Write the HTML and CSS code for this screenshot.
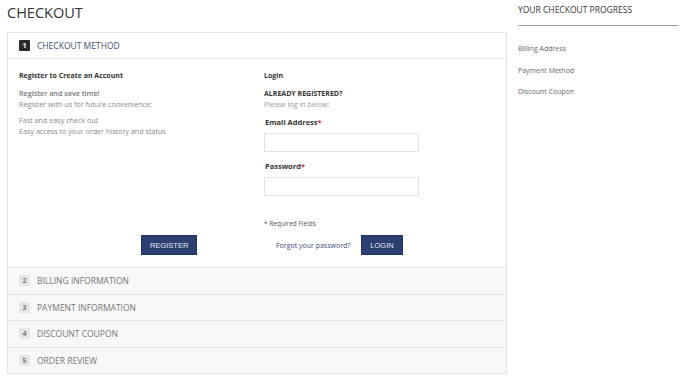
FILE: index.html
```html
<!DOCTYPE html>
<html>
<head>
<meta charset="UTF-8">
<title>Checkout</title>
<link rel="stylesheet" href="styles.css">
</head>
<body>
<div class="page">

<div class="main">
<h1 class="pageTitle">CHECKOUT</h1>

<div class="steps">

<div class="step active">
<div class="stepHead"><span class="num">1</span><span class="stepName">CHECKOUT METHOD</span></div>
<div class="stepBody">

<div class="col colLeft">
<div class="colTop">
<h3 class="colTitle">Register to Create an Account</h3>
<p class="strongLine">Register and save time!</p>
<p class="grey">Register with us for future convenience:</p>
<ul class="perks">
<li>Fast and easy check out</li>
<li>Easy access to your order history and status</li>
</ul>
</div>
<div class="actions regActions">
<button type="button" class="btn">REGISTER</button>
</div>
</div>

<div class="col colRight">
<div class="colTop">
<h3 class="colTitle">Login</h3>
<h4 class="subTitle">ALREADY REGISTERED?</h4>
<p class="lightGrey">Please log in below:</p>
<form id="fLogin">
<label class="fieldLabel" for="email">Email Address<em>*</em></label>
<input type="text" id="email" class="field">
<label class="fieldLabel" for="pass">Password<em>*</em></label>
<input type="password" id="pass" class="field">
<p class="required">* Required Fields</p>
</form>
</div>
<div class="actions loginActions">
<a class="forgot" href="#">Forgot your password?</a>
<button type="button" class="btn">LOGIN</button>
</div>
</div>

</div>
</div>

<div class="step"><div class="stepHead"><span class="num">2</span><span class="stepName">BILLING INFORMATION</span></div></div>
<div class="step"><div class="stepHead"><span class="num">3</span><span class="stepName">PAYMENT INFORMATION</span></div></div>
<div class="step"><div class="stepHead"><span class="num">4</span><span class="stepName">DISCOUNT COUPON</span></div></div>
<div class="step"><div class="stepHead"><span class="num">5</span><span class="stepName">ORDER REVIEW</span></div></div>

</div>
</div>

<div class="side">
<h2 class="sideTitle">YOUR CHECKOUT PROGRESS</h2>
<ul class="progress">
<li>Billing Address</li>
<li>Payment Method</li>
<li>Discount Coupon</li>
</ul>
</div>

</div>
</body>
</html>
```

FILE: styles.css
```css
body{
margin: 0;
font-family: "Open Sans", "Liberation Sans", sans-serif;
color: #333;
background: #fff;
}

.page{
display: flex;
padding: 3px 0 0 7px;
gap: 11px;
}

.main{
width: 500px;
}

.pageTitle{
margin: 0 0 9px 0;
font-size: 14.5px;
line-height: 20px;
font-weight: 400;
color: #333;
}

.steps{
border: 1px solid #e4e4e4;
}

.step + .step{
border-top: 1px solid #e4e4e4;
}

.stepHead{
display: flex;
align-items: center;
height: 25.5px;
padding-left: 11px;
background: #f8f8f8;
font-size: 8.5px;
color: #777;
}

.active .stepHead{
background: #fff;
color: #3d4c7c;
border-bottom: 1px solid #e8e8e8;
height: 25px;
}

.num{
display: inline-block;
width: 11px;
height: 11px;
line-height: 11px;
margin-right: 7px;
text-align: center;
font-size: 7px;
font-weight: 700;
background: #e6e6e6;
color: #777;
border-radius: 1px;
}

.active .num{
background: #2a2a2a;
color: #fff;
}

.stepBody{
display: flex;
padding: 11px 12px 12px 11px;
}

.col{
display: flex;
flex-direction: column;
justify-content: space-between;
height: 185px;
}

.colLeft{
flex: 0 0 245px;
}

.colRight{
flex: 1;
}

.colTop p, .colTop ul{
margin: 0;
}

.colTitle{
margin: 0 0 7px 0;
font-size: 7px;
line-height: 11px;
font-weight: 700;
color: #333;
}

.strongLine{
font-size: 7.2px;
line-height: 11px;
color: #777;
font-weight: 600;
}

.grey{
font-size: 7.2px;
line-height: 11px;
color: #888;
}

.perks{
list-style: none;
padding: 0;
margin-top: 5px !important;
font-size: 7.2px;
line-height: 11px;
color: #888;
}

.subTitle{
margin: 0;
font-size: 7px;
line-height: 11px;
font-weight: 700;
color: #333;
}

.lightGrey{
font-size: 7.2px;
line-height: 11px;
color: #999;
}

.fieldLabel{
display: block;
margin: 7px 0 5px 1px;
font-size: 7.5px;
line-height: 11px;
font-weight: 700;
color: #333;
}

.field + .fieldLabel{
margin-top: 9px;
}

.fieldLabel em{
font-style: normal;
color: #e0262e;
}

.field{
display: block;
box-sizing: border-box;
width: 155px;
height: 19px;
margin: 0;
border: 1px solid #e2e2e2;
background: #fff;
}

.required{
margin-top: 23px !important;
font-size: 6.5px;
line-height: 10px;
color: #555;
}

.actions{
display: flex;
align-items: center;
}

.regActions{
padding-left: 122px;
}

.loginActions{
padding-left: 12px;
gap: 11px;
}

.btn{
height: 20px;
padding: 0 8px;
border: 1px solid #1f3461;
background: #2b3f72;
color: #e6e9f2;
font-family: "Liberation Sans", Arial, sans-serif;
font-size: 7.5px;
}

.forgot{
font-size: 7px;
color: #3d4c7c;
text-decoration: none;
}

.side{
width: 160px;
}

.sideTitle{
margin: 0;
padding: 0 0 9px 0;
font-size: 8.5px;
line-height: 13px;
font-weight: 400;
color: #333;
border-bottom: 1px solid #999;
}

.progress{
list-style: none;
margin: 17px 0 0 0;
padding: 0;
}

.progress li{
font-size: 7px;
line-height: 11px;
margin-bottom: 10.5px;
color: #666;
}
```
